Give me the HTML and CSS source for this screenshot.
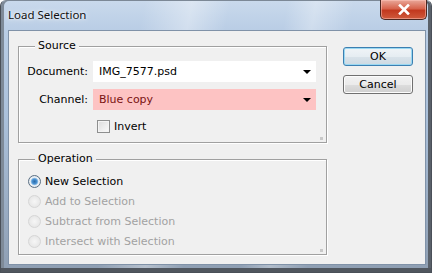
FILE: index.html
```html
<!DOCTYPE html>
<html>
<head>
<meta charset="utf-8">
<link rel="stylesheet" href="styles.css">
</head>
<body>
<div class="window">
  <div class="titlebar">
    <span class="title">Load Selection</span>
    <div class="close">
      <svg width="14" height="11" viewBox="0 0 14 11"><path d="M3 1.5 L11 9.5 M11 1.5 L3 9.5" stroke="#fff" stroke-width="2.6" stroke-linecap="square" fill="none"/></svg>
    </div>
  </div>
  <div class="client">
    <div class="main">
      <div class="group source">
        <div class="legend">Source</div>
        <div class="form">
          <label class="lbl">Document:</label>
          <div class="select doc"><span>IMG_7577.psd</span><i class="arrow"></i></div>
          <label class="lbl">Channel:</label>
          <div class="select chan"><span>Blue copy</span><i class="arrow"></i></div>
          <span></span>
          <div class="check"><span class="box"></span><span>Invert</span></div>
        </div>
        <i class="grip"></i>
      </div>
      <div class="group op">
        <div class="legend">Operation</div>
        <div class="radios">
          <div class="radio on"><span class="dot"></span><span>New Selection</span></div>
          <div class="radio off"><span class="dot"></span><span>Add to Selection</span></div>
          <div class="radio off"><span class="dot"></span><span>Subtract from Selection</span></div>
          <div class="radio off"><span class="dot"></span><span>Intersect with Selection</span></div>
        </div>
        <i class="grip"></i>
      </div>
    </div>
    <div class="buttons">
      <div class="btn ok">OK</div>
      <div class="btn">Cancel</div>
    </div>
  </div>
</div>
</body>
</html>
```
FILE: styles.css
```css
html, body { margin: 0; padding: 0; background: #fff; }
body { width: 432px; height: 273px; overflow: hidden; }

.window {
  box-sizing: border-box;
  width: 432px;
  height: 273px;
  border: 1px solid #4a5058;
  border-top-color: #7c8896;
  border-radius: 6px 6px 0 0;
  padding: 0 5px 7px 7px;
  background:
    linear-gradient(100deg, rgba(255,255,255,0) 30%, rgba(255,255,255,0.35) 40%, rgba(255,255,255,0) 48%, rgba(255,255,255,0) 60%, rgba(255,255,255,0.3) 66%, rgba(255,255,255,0) 74%),
    linear-gradient(180deg, #c9d9ec 0px, #b9cde5 30px, #aac0da 120px, #8e9eb2 273px);
  display: flex;
  flex-direction: column;
  box-shadow: inset 0 -4px 0 #50565e, inset 3px 0 0 #7e8a98, inset -3px 0 0 #5a616a;
}

.titlebar {
  height: 29px;
  flex: none;
  display: flex;
  align-items: flex-start;
  justify-content: space-between;
}
.title {
  font-family: "Noto Sans", sans-serif;
  font-size: 11.5px;
  line-height: 16px;
  color: #111;
  margin-top: 6px;
  text-shadow: 0 0 6px rgba(255,255,255,0.9), 0 0 3px rgba(255,255,255,0.9);
}
.close {
  box-sizing: border-box;
  width: 47px;
  height: 20px;
  margin-top: -1px;
  margin-right: -1px;
  border: 1px solid #4b2720;
  border-top: none;
  border-radius: 0 0 5px 5px;
  background: linear-gradient(180deg, #e9a89a 0%, #d7644d 45%, #c2391f 55%, #cf5a3c 100%);
  box-shadow: inset 0 0 0 1px rgba(255,200,190,0.5);
  display: flex;
  align-items: center;
  justify-content: center;
}

.client {
  box-sizing: border-box;
  flex: 1;
  border: 1px solid #8092a8;
  background: #f0f0f0;
  display: flex;
  align-items: flex-start;
  padding: 15px 0 0 9px;
  font-family: "DejaVu Sans", sans-serif;
  font-size: 11px;
  color: #000;
}

.main { display: flex; flex-direction: column; gap: 16px; width: 309px; }

.group {
  box-sizing: border-box;
  position: relative;
  border: 1px solid #a0a0a0;
  box-shadow: 1px 1px 0 #fff, inset 1px 1px 0 #fff;
}
.source { height: 97px; }
.op { height: 96px; }

.legend {
  width: fit-content;
  margin: -8px 0 0 16px;
  padding: 0 3px;
  line-height: 14px;
  background: #f0f0f0;
}

.form {
  display: grid;
  grid-template-columns: 69px 223px;
  grid-auto-rows: 21px;
  column-gap: 5px;
  row-gap: 7px;
  margin-top: 8px;
}
.form .lbl { text-align: right; line-height: 21px; }

.select {
  display: flex;
  align-items: center;
  justify-content: space-between;
  padding: 0 5px 0 6px;
  line-height: 21px;
}
.doc { background: #fff; }
.chan { background: #fdc3c3; color: #7a1212; }
.arrow {
  width: 0; height: 0;
  border-left: 4px solid transparent;
  border-right: 4px solid transparent;
  border-top: 4px solid #000;
  margin-top: 1px;
}

.check {
  display: flex;
  align-items: center;
  gap: 4px;
  height: 14px;
  margin-top: 2px;
  margin-left: 4px;
}
.box {
  box-sizing: border-box;
  width: 13px; height: 13px;
  border: 1px solid #8e8f8f;
  background: linear-gradient(135deg, #dcdcdc, #fbfbfb);
  box-shadow: inset 0 0 0 1px #f4f4f4;
}

.radios { display: flex; flex-direction: column; margin-top: 5px; padding-left: 9px; }
.radio { display: flex; align-items: center; gap: 4px; height: 20px; }
.dot {
  box-sizing: border-box;
  width: 13px; height: 13px;
  border-radius: 50%;
}
.on .dot {
  border: 1px solid #5a6f83;
  background: radial-gradient(circle, #2a6aa8 0, #4d94d4 2.5px, #9dc7ea 3.5px, #eef2f6 4.2px, #dfe4ea 6px);
}
.off { color: #a2a2a2; }
.off .dot {
  border: 1px solid #d6d6d6;
  background: radial-gradient(circle, #f6f6f6 0, #e6e6e6 6px);
}

.grip {
  position: absolute;
  right: 3px;
  bottom: 2px;
  width: 3px;
  height: 3px;
  background: radial-gradient(circle, #c8c8c8 0.8px, transparent 1px) 0 0 / 2px 2px;
}

.buttons {
  display: flex;
  flex-direction: column;
  gap: 9px;
  margin-left: 16px;
  margin-top: 1px;
}
.btn {
  box-sizing: border-box;
  width: 70px;
  height: 19px;
  border: 1px solid #707070;
  border-radius: 3px;
  background: linear-gradient(180deg, #f2f2f2 0%, #ebebeb 50%, #dddddd 51%, #cfcfcf 100%);
  box-shadow: inset 0 0 0 1px #fcfcfc;
  display: flex;
  align-items: center;
  justify-content: center;
  line-height: 16px;
}
.btn.ok {
  border-color: #3c7fb1;
  box-shadow: inset 0 0 0 1px #9ad8f2;
  background: linear-gradient(180deg, #f0f4f7 0%, #e6edf2 50%, #d9e3ea 51%, #cdd9e2 100%);
}
```
